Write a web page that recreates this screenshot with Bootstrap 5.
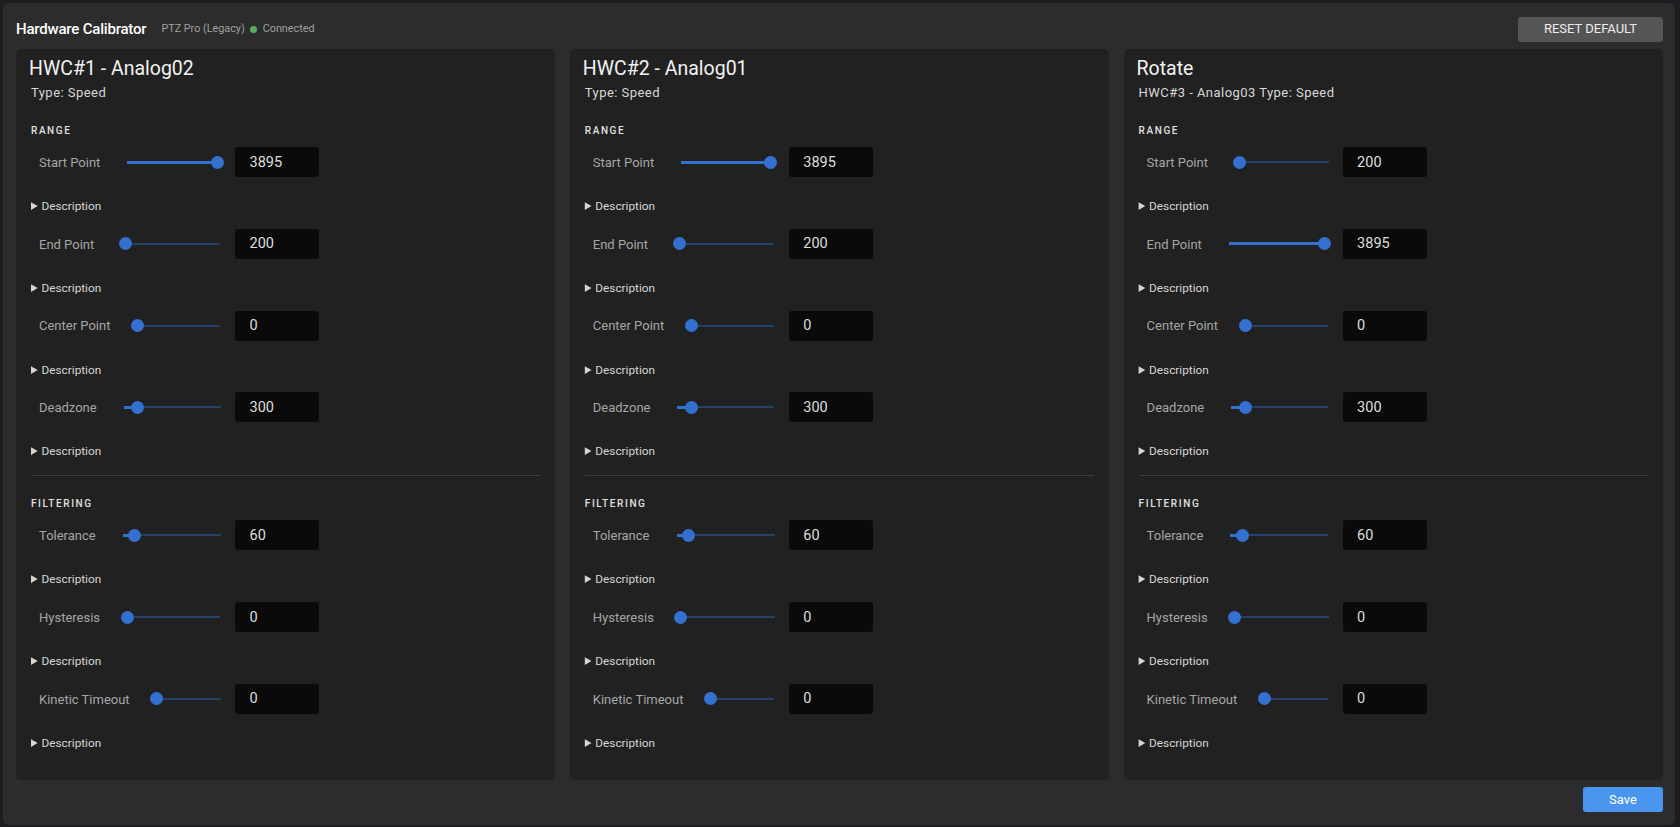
<!DOCTYPE html>
<html lang="en">
<head>
  <meta charset="UTF-8" />
  <meta name="viewport" content="width=device-width, initial-scale=1.0"/>
  <title>Hardware Calibrator</title>
  <link href="https://cdn.jsdelivr.net/npm/bootstrap@5.3.2/dist/css/bootstrap.min.css" rel="stylesheet">
  <style>
    html, body { height: 100%; }
    body { background: #1c1d20; color: #e6e6e6; font-family: Roboto, "Liberation Sans", sans-serif; overflow: hidden; }
    .panel-main { height: 822px; margin: 3px 5px 0 3px; padding: 10px 12px 13px 13px; background: #2c2c2c; border-radius: 6px; }
    .page-head { height: 32px; }
    .app-title { font-size: 15px; font-weight: 500; color: #fff; letter-spacing: -0.2px; margin: 0; }
    .app-sub { font-size: 10.8px; color: #a0a0a0; margin-left: 15px; }
    .status-dot { width: 7px; height: 7px; border-radius: 50%; background: #58ad5c; margin: 0 6px 0 5px; }
    .btn-reset { width: 145px; height: 25px; padding: 0; font-size: 13px; color: #eee; background: #555; border: 0; border-radius: 3px; }
    .card-cols { height: 731px; margin-top: 4px; gap: 14.4px; }
    .hwc-card { flex: 1 1 0; background: #212121; border: 0; border-radius: 5px; padding: 8px 15px 0 15px; color: #e6e6e6; }
    .hwc-title { font-size: 19.5px; line-height: 24px; font-weight: 400; color: #f2f2f2; margin: 0 0 0 -2px; }
    .hwc-sub { font-size: 13px; line-height: 18px; letter-spacing: .46px; color: #d8d8d8; margin-top: 3px; }
    .group-label { font-size: 10px; line-height: 14px; font-weight: 500; letter-spacing: 1.6px; color: #e0e0e0; text-transform: uppercase; }
    .group-range { margin-top: 22px; }
    .group-filter { margin-top: 21px; }
    .cal-row { height: 30px; margin-top: 14.8px; width: 288px; padding-left: 8px; }
    .group-label + .cal-row { margin-top: 9px; }
    .cal-label { font-size: 13px; padding-top: 1px; color: #a6a6a6; white-space: nowrap; margin-right: 27px; }
    .cal-slider { flex: 1 1 0; min-width: 0; height: 13px; margin: 0 10px 0 -6.5px; padding: 0; background-color: transparent;
      background-image: linear-gradient(#3370d0, #3370d0), linear-gradient(#24416c, #24416c);
      background-repeat: no-repeat;
      background-position: 6.5px center, 6.5px center;
      background-size: calc((100% - 13px) * var(--fill)) 3px, calc(100% - 11px) 2px; }
    .cal-slider::-webkit-slider-runnable-track { background: transparent; height: 13px; }
    .cal-slider::-webkit-slider-thumb { width: 13px; height: 13px; margin-top: 0; background: #3370d0; border-radius: 50%; }
    .cal-value { flex: none; width: 84px; height: 30px; padding: 0 14.5px; font-size: 14.5px; color: #dedede; background: #0a0a0a; border: 0; border-radius: 3px; }
    .cal-value:focus { background: #0a0a0a; color: #dedede; box-shadow: none; }
    .cal-desc { font-size: 11.8px; line-height: 16px; color: #d6d6d6; margin-top: 21px; }
    .cal-desc summary { cursor: pointer; }
    .cal-desc summary span { margin-left: -2px; }
    .group-rule { margin: 16px 0 0 0; border-color: #3e3e3e; opacity: 1; }
    .page-foot { margin-top: 7px; }
    .btn-save { width: 80px; height: 25px; padding: 0; font-size: 13px; color: #fff; background: #4a96ee; border: 0; border-radius: 3px; }
  </style>
</head>
<body>
  <div class="panel-main d-flex flex-column">
    <div class="page-head d-flex align-items-center justify-content-between">
      <div class="d-flex align-items-center">
        <h1 class="app-title">Hardware Calibrator</h1>
        <span class="app-sub">PTZ Pro (Legacy)</span>
        <span class="status-dot"></span>
        <span class="app-sub ms-0">Connected</span>
      </div>
      <button type="button" class="btn btn-reset">RESET DEFAULT</button>
    </div>

    <div id="cards" class="card-cols d-flex"></div>

    <div class="page-foot d-flex justify-content-end">
      <button type="button" class="btn btn-save">Save</button>
    </div>
  </div>

  <script src="https://cdn.jsdelivr.net/npm/bootstrap@5.3.2/dist/js/bootstrap.bundle.min.js"></script>
  <script>
    const hwcs = [
      { title: 'HWC#1 - Analog02', sub: 'Type: Speed', start: [3895, .984], end: [200, .045] },
      { title: 'HWC#2 - Analog01', sub: 'Type: Speed', start: [3895, .984], end: [200, .045] },
      { title: 'Rotate', sub: 'HWC#3 - Analog03 Type: Speed', start: [200, .045], end: [3895, .984] }
    ];

    function row(label, value, fill) {
      const pct = Math.round(fill * 1000);
      return `
        <div class="cal-row d-flex align-items-center">
          <span class="cal-label">${label}</span>
          <input type="range" class="form-range cal-slider" min="0" max="1000" value="${pct}" style="--fill:${fill}">
          <input type="text" class="form-control cal-value" value="${value}">
        </div>
        <details class="cal-desc"><summary><span>Description</span></summary></details>`;
    }

    document.getElementById('cards').innerHTML = hwcs.map(h => `
      <div class="card hwc-card">
        <h2 class="hwc-title">${h.title}</h2>
        <div class="hwc-sub">${h.sub}</div>
        <div class="group-label group-range">Range</div>
        ${row('Start Point', h.start[0], h.start[1])}
        ${row('End Point', h.end[0], h.end[1])}
        ${row('Center Point', 0, 0)}
        ${row('Deadzone', 300, .145)}
        <hr class="group-rule">
        <div class="group-label group-filter">Filtering</div>
        ${row('Tolerance', 60, .125)}
        ${row('Hysteresis', 0, 0)}
        ${row('Kinetic Timeout', 0, 0)}
      </div>`).join('');
  </script>
</body>
</html>
